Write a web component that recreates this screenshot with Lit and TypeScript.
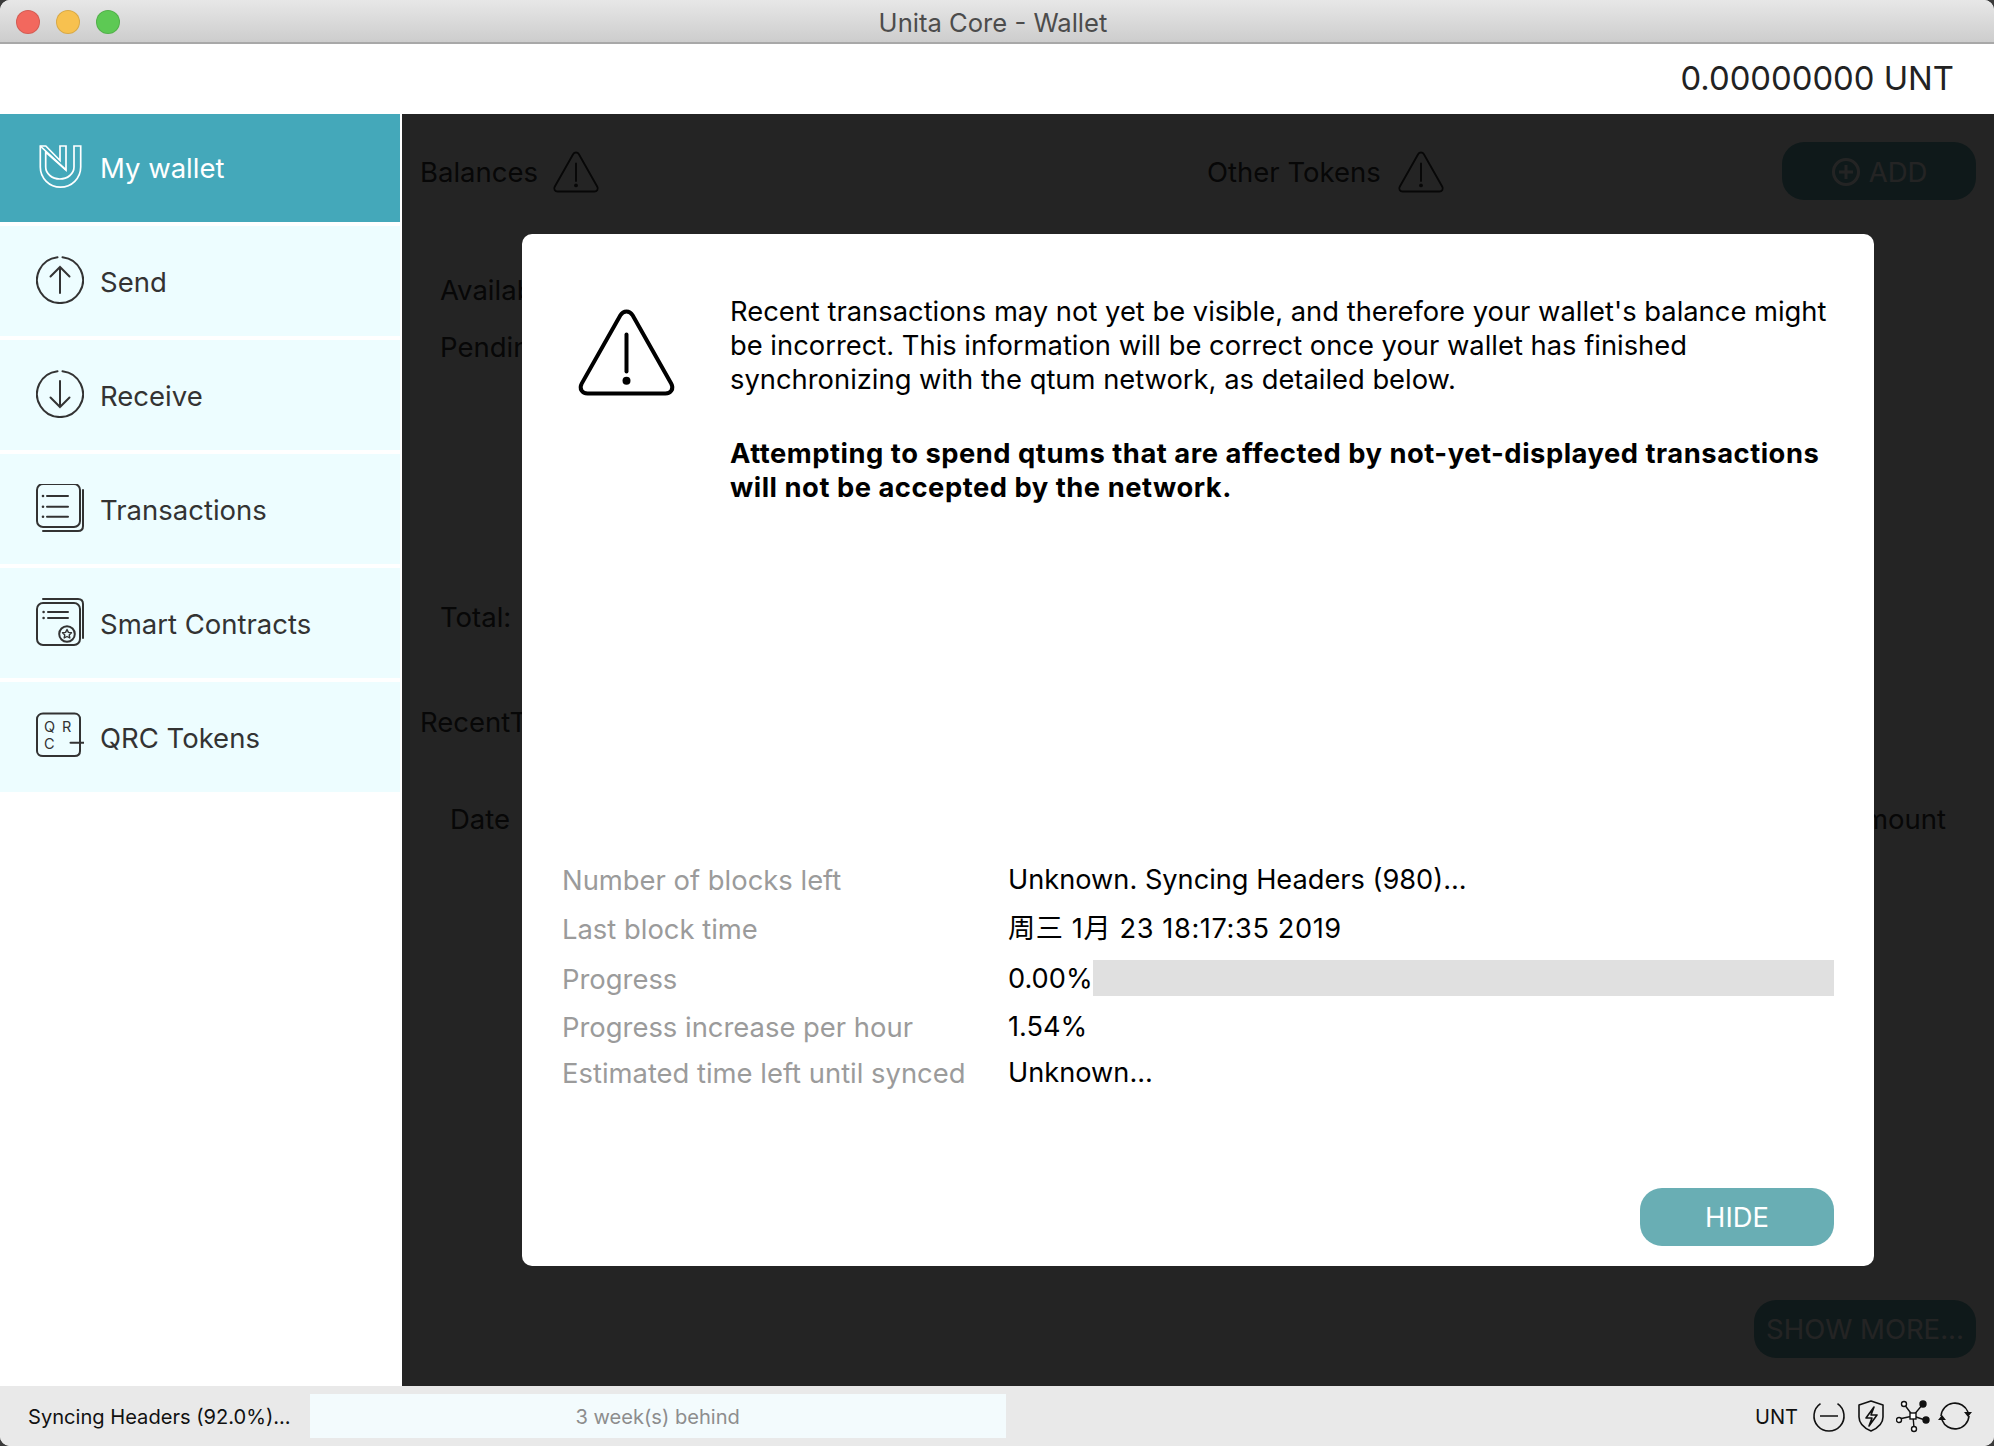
import { LitElement, html, css, svg } from 'lit';
import { customElement } from 'lit/decorators.js';
import { classMap } from 'lit/directives/class-map.js';

const warning = svg`<path d="M24 4.500c1.200 0 2.200.6 2.900 1.800l18.400 32.500c1.300 2.400-.2 4.700-2.800 4.700H5.500c-2.600 0-4.100-2.300-2.800-4.700L21.100 6.300C21.800 5.100 22.800 4.500 24 4.500z" fill="none" stroke="currentColor" stroke-width="1.900"/><path d="M24 15.500V33" stroke="currentColor" stroke-width="1.900" stroke-linecap="round"/><circle cx="24" cy="37.400" r="1.900" fill="currentColor"/>`;

const navItems = [
  {
    label: 'My wallet',
    active: true,
    icon: svg`<g fill="none" stroke="currentColor" stroke-width="1.700"><path d="M38 3h6.700v21a20.200 20.200 0 0 1-40.400 0V3h5.500L24 17.500V3h6v24L9.700 9v15a14.150 12 0 0 0 28.300 0z"/><path d="M4.300 3 30 27"/></g>`
  },
  {
    label: 'Send',
    icon: svg`<g fill="none" stroke="currentColor" stroke-width="2" stroke-linecap="round"><path d="M26.500 1.200A23 23 0 1 1 21.500 1.200"/><path d="M24 37V11M14.500 20.500 24 11l9.500 9.500"/></g>`
  },
  {
    label: 'Receive',
    icon: svg`<g fill="none" stroke="currentColor" stroke-width="2" stroke-linecap="round"><path d="M26.500 1.200A23 23 0 1 1 21.500 1.200"/><path d="M24 11v26M14.500 27.500 24 37l9.500-9.500"/></g>`
  },
  {
    label: 'Transactions',
    icon: svg`<g fill="none" stroke="currentColor" stroke-width="2" stroke-linecap="round"><rect x="1" y="0" width="43" height="43" rx="6"/><path d="M47 6v36c0 3-2 5-5 5H7"/><path d="M11 12h21M11 22.700h21M11 32.700h21"/></g><circle cx="7" cy="12" r="1.300" fill="currentColor"/><circle cx="7" cy="22.700" r="1.300" fill="currentColor"/><circle cx="7" cy="32.700" r="1.300" fill="currentColor"/>`
  },
  {
    label: 'Smart Contracts',
    icon: svg`<g fill="none" stroke="currentColor" stroke-width="2" stroke-linecap="round" stroke-linejoin="round"><rect x="1" y="5" width="43" height="42" rx="6"/><path d="M7 1h35c3 0 5 2 5 5v34"/><path d="M12 14h20M12 20h20"/><circle cx="31" cy="36" r="7.800"/><path d="M31 31.500l1.400 2.900 3.100.4-2.300 2.100.6 3.100-2.800-1.500-2.800 1.500.6-3.100-2.300-2.100 3.100-.4z" stroke-width="1.400"/></g><circle cx="7.600" cy="14" r="1.300" fill="currentColor"/><circle cx="7.600" cy="20" r="1.300" fill="currentColor"/>`
  },
  {
    label: 'QRC Tokens',
    icon: svg`<g fill="none" stroke="currentColor" stroke-width="2" stroke-linecap="round"><path d="M44 30V7c0-3-2-5.500-5.500-5.500H7C3.500 1.500 1 4 1 7v32c0 3 2.500 5 6 5h31.500c3.500 0 5.500-2 5.500-5v-9"/><path d="M34.500 30.700H48"/></g><text x="8" y="19.500" font-size="14.500" fill="currentColor" font-family="Inter, sans-serif">Q</text><text x="26" y="19.500" font-size="14.500" fill="currentColor" font-family="Inter, sans-serif">R</text><text x="8" y="37" font-size="14.500" fill="currentColor" font-family="Inter, sans-serif">C</text>`
  }
];

const syncRows = [
  { label: 'Number of blocks left', value: 'Unknown. Syncing Headers (980)...' },
  { label: 'Last block time', value: '周三 1月 23 18:17:35 2019', date: true },
  { label: 'Progress', value: '0.00%', bar: true },
  { label: 'Progress increase per hour', value: '1.54%' },
  { label: 'Estimated time left until synced', value: 'Unknown...' }
];

@customElement('app-root')
export class AppRoot extends LitElement {
  static styles = css`
    :host {
      display: block;
      width: 1994px;
      height: 1446px;
      background: #3a3a3a;
      font-family: Inter, 'Noto Sans CJK SC', sans-serif;
      color: #333;
    }

    .window {
      height: 100%;
      display: flex;
      flex-direction: column;
      border-radius: 10px;
      overflow: hidden;
      background: #fff;
    }

    .titlebar {
      flex: 0 0 44px;
      box-sizing: border-box;
      position: relative;
      display: flex;
      align-items: center;
      justify-content: center;
      padding: 2px 8px 0 0;
      background: linear-gradient(#e7e7e7, #cdcdcd);
      border-bottom: 2px solid #a8a8a8;
      font-size: 25.6px;
      color: #4c4c4c;
    }

    .lights {
      position: absolute;
      left: 16px;
      top: 10px;
      display: flex;
      gap: 16px;
    }

    .light {
      width: 24px;
      height: 24px;
      box-sizing: border-box;
      border-radius: 50%;
      border: 1px solid rgba(0, 0, 0, 0.12);
    }

    .red { background: #f2685e; }
    .yellow { background: #f7c14f; }
    .green { background: #5dc954; }

    .balance {
      flex: 0 0 70px;
      box-sizing: border-box;
      display: flex;
      align-items: center;
      justify-content: flex-end;
      padding: 0 40px 2px 0;
      font-size: 32.8px;
      color: #222;
    }

    .middle {
      flex: 1;
      display: flex;
      min-height: 0;
    }

    .sidebar {
      flex: 0 0 402px;
      box-sizing: border-box;
      padding-right: 2px;
      display: flex;
      flex-direction: column;
      gap: 4px;
    }

    .nav {
      height: 110px;
      display: flex;
      align-items: center;
      gap: 16px;
      padding-left: 36px;
      background: #edfdff;
      font-size: 27.5px;
      color: #333;
    }

    .nav span {
      padding-top: 2px;
    }

    .nav.active {
      height: 108px;
      background: #44a8ba;
      color: #fff;
    }

    .nav.active span {
      padding-top: 0;
    }

    .nav svg {
      width: 48px;
      height: 48px;
      flex: none;
      margin-bottom: 2px;
    }

    .main {
      flex: 1;
      position: relative;
      overflow: hidden;
      background: #fff;
      box-sizing: border-box;
      padding: 0 18px 28px 18px;
      display: flex;
      flex-direction: column;
      font-size: 27.5px;
    }

    .heads {
      flex: 0 0 114px;
      display: flex;
      align-items: center;
    }

    .head {
      display: flex;
      align-items: center;
      gap: 14px;
      padding-top: 2px;
    }

    .head svg {
      width: 48px;
      height: 48px;
    }

    .tokens {
      margin-left: 607px;
      gap: 16px;
    }

    .pill {
      box-sizing: border-box;
      border-radius: 22px;
      background: #69aeb4;
      color: #fff;
      height: 58px;
      padding-top: 2px;
      display: flex;
      align-items: center;
      justify-content: center;
      gap: 8px;
    }

    .add {
      width: 194px;
      margin-left: auto;
    }

    .add svg {
      width: 30px;
      height: 30px;
    }

    .panel {
      height: 420px;
      padding: 45px 20px 14px;
      background: #fafafa;
      box-sizing: border-box;
      display: flex;
      flex-direction: column;
    }

    .panel div + div {
      margin-top: 23px;
    }

    .panel .total {
      margin-top: auto;
    }

    .recent {
      margin-top: 57px;
    }

    .table {
      flex: 1;
      margin-top: 36px;
      padding: 27px 30px 0;
      background: #fafafa;
      display: flex;
      justify-content: space-between;
    }

    .more {
      align-self: flex-end;
      width: 222px;
      margin-top: 24px;
      flex: none;
      padding-top: 0;
    }

    .overlay {
      position: absolute;
      inset: 0;
      padding: 120px;
      background: rgba(0, 0, 0, 0.86);
      display: flex;
    }

    .modal {
      flex: 1;
      background: #fff;
      border-radius: 10px;
      color: #000;
      display: flex;
      flex-direction: column;
      padding: 60px 40px 20px;
      font-size: 27.35px;
      line-height: 34px;
    }

    .intro {
      display: flex;
      height: 561px;
      box-sizing: border-box;
    }

    .modal-icon {
      flex: none;
      width: 148px;
      padding: 8px 0 0 14px;
      box-sizing: border-box;
    }

    .modal-icon svg {
      width: 101px;
      height: 101px;
      display: block;
    }

    .copy {
      padding: 1px 0 0 20px;
      flex: 1;
    }

    .copy p {
      margin: 0 0 40px;
    }

    .copy b {
      letter-spacing: 0.52px;
    }

    .sync {
      display: grid;
      grid-template-columns: 446px 1fr;
      grid-template-rows: 47px 50px 51px 44px 48px;
      align-items: center;
    }

    .sync .label {
      color: #9b9b9b;
      font-size: 27.4px;
      padding-top: 3px;
    }

    .value {
      display: flex;
      align-items: center;
      font-size: 27.2px;
    }

    .value span {
      padding-top: 3px;
    }

    .value span.date {
      letter-spacing: 0.6px;
    }

    .bar {
      flex: 1;
      height: 36px;
      background: #e0e0e0;
    }

    .actions {
      margin-top: auto;
      display: flex;
      justify-content: flex-end;
    }

    .hide {
      width: 194px;
    }

    .status {
      flex: 0 0 60px;
      display: flex;
      align-items: center;
      padding: 0 22px 0 28px;
      background: #e9e9e9;
      font-size: 20.1px;
      color: #111;
    }

    .status span {
      padding-top: 2px;
    }

    .progress {
      width: 696px;
      height: 44px;
      box-sizing: border-box;
      padding-top: 2px;
      margin-left: 19px;
      background: #f3fbfd;
      color: #8d8d8d;
      display: flex;
      align-items: center;
      justify-content: center;
    }

    .unit {
      margin-left: auto;
    }

    .tray {
      display: flex;
      align-items: center;
      gap: 8px;
      margin-left: 14px;
    }

    .tray svg {
      width: 34px;
      height: 34px;
    }
  `;

  render() {
    return html`
      <div class="window">
        <div class="titlebar">
          <div class="lights">
            <span class="light red"></span>
            <span class="light yellow"></span>
            <span class="light green"></span>
          </div>
          Unita Core - Wallet
        </div>
        <div class="balance">0.00000000 UNT</div>
        <div class="middle">
          <nav class="sidebar">
            ${navItems.map(
              (item) => html`
                <div class=${classMap({ nav: true, active: !!item.active })}>
                  <svg viewBox="0 0 48 48">${item.icon}</svg>
                  <span>${item.label}</span>
                </div>
              `
            )}
          </nav>
          <main class="main">
            <div class="heads">
              <div class="head">Balances <svg viewBox="0 0 48 48">${warning}</svg></div>
              <div class="head tokens">Other Tokens <svg viewBox="0 0 48 48">${warning}</svg></div>
              <div class="pill add">
                <svg viewBox="0 0 30 30"><g fill="none" stroke="currentColor" stroke-width="3"><circle cx="15" cy="15" r="12.5"/><path d="M15 8v14M8 15h14"/></g></svg>
                ADD
              </div>
            </div>
            <div class="panel">
              <div>Available:</div>
              <div>Pending:</div>
              <div class="total">Total:</div>
            </div>
            <div class="recent">RecentTransactions</div>
            <div class="table"><span>Date</span><span>Amount</span></div>
            <div class="pill more">SHOW MORE...</div>
            <div class="overlay">
              <div class="modal">
                <div class="intro">
                  <div class="modal-icon"><svg viewBox="0 0 48 48">${warning}</svg></div>
                  <div class="copy">
                    <p>Recent transactions may not yet be visible, and therefore your wallet's balance might be incorrect. This information will be correct once your wallet has finished synchronizing with the qtum network, as detailed below.</p>
                    <p><b>Attempting to spend qtums that are affected by not-yet-displayed transactions will not be accepted by the network.</b></p>
                  </div>
                </div>
                <div class="sync">
                  ${syncRows.map(
                    (row) => html`
                      <div class="label">${row.label}</div>
                      <div class="value"><span class=${classMap({ date: !!row.date })}>${row.value}</span>${row.bar ? html`<div class="bar"></div>` : ''}</div>
                    `
                  )}
                </div>
                <div class="actions"><div class="pill hide">HIDE</div></div>
              </div>
            </div>
          </main>
        </div>
        <footer class="status">
          <span>Syncing Headers (92.0%)...</span>
          <div class="progress">3 week(s) behind</div>
          <span class="unit">UNT</span>
          <div class="tray">
            <svg viewBox="0 0 34 34"><g fill="none" stroke="#111" stroke-width="1.6"><path d="M8.500 4.700A15 15 0 1 0 25.500 4.700"/><path d="M8 17h18"/></g></svg>
            <svg viewBox="0 0 34 34"><g fill="none" stroke="#111" stroke-width="1.6" stroke-linejoin="round"><path d="M17 2l12 4v12c0 7-5 11-12 14C10 29 5 25 5 18V6z"/><path d="M20 8l-8 11h6l-3 8 8-11h-6z"/></g></svg>
            <svg viewBox="0 0 34 34"><g fill="#fff" stroke="#111" stroke-width="1.4"><path d="M8 5l9 12M27 5l-10 12M3 20l14-3M29 21l-12-4M18 29l-1-12" fill="none"/><rect x="14" y="14" width="6" height="6"/><circle cx="8" cy="5" r="2.5"/><circle cx="3" cy="21" r="2.5"/><circle cx="18" cy="30" r="2.5"/><circle cx="27" cy="5" r="3" fill="#111"/><circle cx="30" cy="21" r="3" fill="#111"/></g></svg>
            <svg viewBox="0 0 34 34"><g fill="none" stroke="#111" stroke-width="1.6"><path d="M3 17a14 14 0 0 1 27-4M31 17a14 14 0 0 1-27 4"/></g><path d="M26 13h8l-4 5zM0 21h8l-4-5z" fill="#111"/></svg>
          </div>
        </footer>
      </div>
    `;
  }
}
